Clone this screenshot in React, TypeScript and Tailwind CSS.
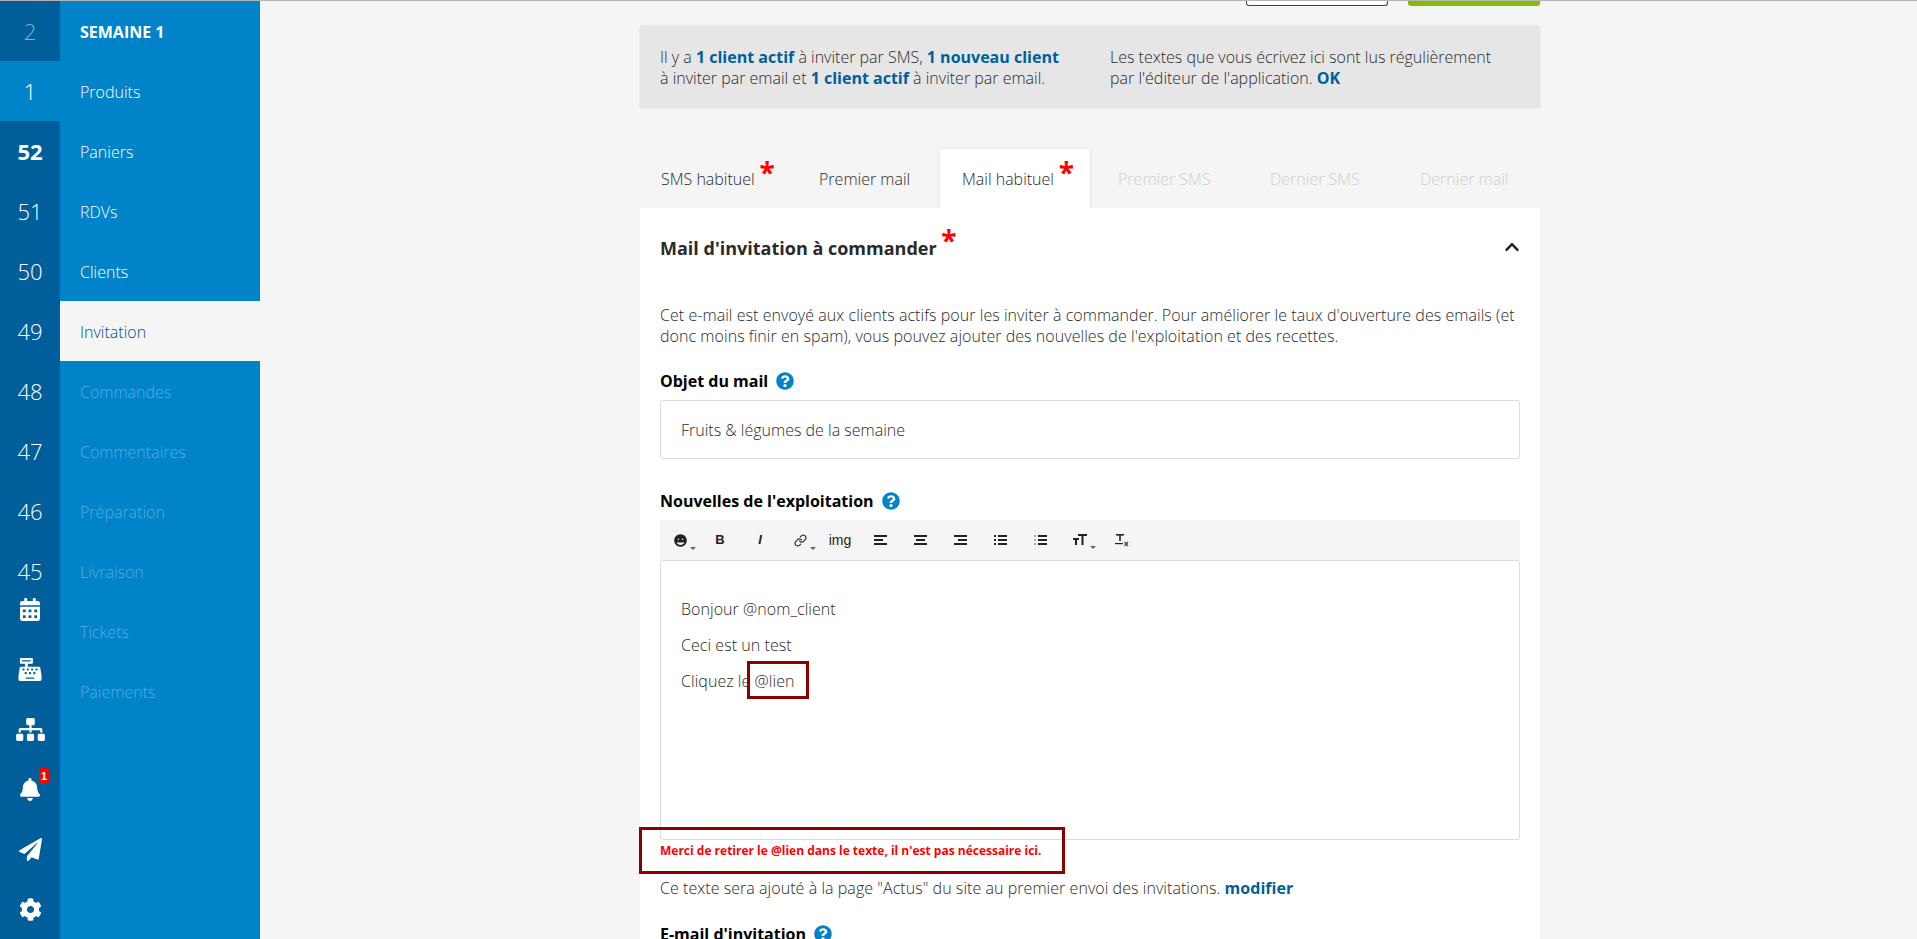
import { Link } from "lucide-react";
import {
  FaBell,
  FaCalendarAlt,
  FaCashRegister,
  FaChevronUp,
  FaCog,
  FaGrin,
  FaPaperPlane,
  FaQuestionCircle,
  FaSitemap,
} from "react-icons/fa";

const weeks = [
  { n: "2", cls: "bg-[#005f9a] text-white/50 font-light" },
  { n: "1", cls: "bg-[#0083c9] text-white font-light" },
  { n: "52", cls: "text-white font-bold" },
  { n: "51", cls: "text-white font-light" },
  { n: "50", cls: "text-white font-light" },
  { n: "49", cls: "text-white font-light" },
  { n: "48", cls: "text-white font-light" },
  { n: "47", cls: "text-white font-light" },
  { n: "46", cls: "text-white font-light" },
  { n: "45", cls: "text-white font-light" },
];

const menu = [
  { label: "Produits", on: true },
  { label: "Paniers", on: true },
  { label: "RDVs", on: true },
  { label: "Clients", on: true },
  { label: "Invitation", active: true },
  { label: "Commandes" },
  { label: "Commentaires" },
  { label: "Préparation" },
  { label: "Livraison" },
  { label: "Tickets" },
  { label: "Paiements" },
];

function Star() {
  return <span className="absolute top-[-9px] right-[-20px] text-[28px] leading-[28px] font-bold text-[#ff0000]">*</span>;
}

function Help() {
  return <FaQuestionCircle className="w-[18px] h-[18px] text-[#0083c9]" />;
}

function Lines({ b }: { b: string }) {
  return (
    <span className="flex flex-col gap-[2px] w-[13px]">
      <span className="h-[2px] bg-[#222]" />
      <span className={`h-[2px] bg-[#222] ${b}`} />
      <span className="h-[2px] bg-[#222]" />
    </span>
  );
}

function ListIcon({ dot }: { dot: string }) {
  return (
    <span className="flex flex-col gap-[2px] w-[13px]">
      {[0, 1, 2].map((i) => (
        <span key={i} className="flex gap-[2px] h-[2px]">
          <span className={`w-[2px] ${dot}`} />
          <span className="flex-1 bg-[#222]" />
        </span>
      ))}
    </span>
  );
}

function Caret() {
  return <span className="absolute right-[-9px] bottom-[-3px] border-x-[3px] border-t-[3px] border-x-transparent border-t-[#666]" />;
}

function ToolBtn({ children }: { children: React.ReactNode }) {
  return <div className="relative w-[40px] h-[40px] flex items-center justify-center text-[#222]">{children}</div>;
}

export default function App() {
  return (
    <div className="relative flex h-[939px] overflow-hidden bg-[#f5f5f5] border-t border-[#b5b5b5] font-['Open_Sans',sans-serif] text-[16px] text-[#2a2a2a]">
      {/* Weeks column */}
      <div className="w-[60px] shrink-0 bg-[#005f9a] flex flex-col">
        {weeks.map((w) => (
          <div key={w.n} className={`h-[60px] shrink-0 flex items-center justify-center text-[22px] ${w.cls}`}>
            {w.n}
          </div>
        ))}
        <div className="mt-[-22px] flex flex-col items-center text-white">
          <div className="h-[60px] flex items-center justify-center">
            <FaCalendarAlt className="w-[20px] h-[23px]" />
          </div>
          <div className="h-[60px] flex items-center justify-center">
            <FaCashRegister className="w-[24px] h-[23px]" />
          </div>
          <div className="h-[60px] flex items-center justify-center">
            <FaSitemap className="w-[29px] h-[23px]" />
          </div>
          <div className="relative h-[60px] flex items-center justify-center">
            <FaBell className="w-[20px] h-[23px]" />
            <span className="absolute top-[9px] right-[-9px] w-[10px] h-[16px] rounded-[3px] bg-[#ff0000] text-white text-[11px] font-bold leading-[16px] text-center font-['Liberation_Sans',sans-serif]">1</span>
          </div>
          <div className="h-[60px] flex items-center justify-center">
            <FaPaperPlane className="w-[23px] h-[23px]" />
          </div>
          <div className="h-[60px] flex items-center justify-center">
            <FaCog className="w-[23px] h-[23px]" />
          </div>
        </div>
      </div>

      {/* Menu column */}
      <div className="w-[200px] shrink-0 bg-[#0083c9] flex flex-col">
        <div className="h-[60px] shrink-0 flex items-center pl-[20px] pt-[1px] text-white font-bold">SEMAINE 1</div>
        {menu.map((m) => (
          <div
            key={m.label}
            className={`h-[60px] shrink-0 flex items-center pl-[20px] pt-[1px] font-light ${
              m.active ? "bg-[#f5f5f5] text-[#004d7f]" : m.on ? "text-white" : "text-white/35"
            }`}
          >
            {m.label}
          </div>
        ))}
      </div>

      {/* Main */}
      <div className="w-[900px] ml-[380px] shrink-0 flex flex-col">
        <div className="shrink-0 flex justify-end gap-[20px] h-[5px]">
          <div className="w-[142px] h-[5px] bg-white border-x border-b border-[#444] rounded-b-[3px]" />
          <div className="w-[132px] h-[5px] bg-[#83bd00] rounded-b-[3px]" />
        </div>

        <div className="shrink-0 mt-[20px] h-[82px] bg-[#e6e6e6] rounded-[3px] shadow-[0_0_2px_rgba(0,0,0,0.15)] flex px-[20px] pt-[21px] leading-[21px] font-light">
          <p className="w-[450px]">
            Il y a <b className="font-bold text-[#005f9a]">1 client actif</b> à inviter par SMS, <b className="font-bold text-[#005f9a]">1 nouveau client</b>
            <br />à inviter par email et <b className="font-bold text-[#005f9a]">1 client actif</b> à inviter par email.
          </p>
          <p>
            Les textes que vous écrivez ici sont lus régulièrement
            <br />par l'éditeur de l'application. <b className="font-bold text-[#005f9a]">OK</b>
          </p>
        </div>

        {/* Tabs */}
        <div className="shrink-0 mt-[40px] flex h-[60px] pt-[1px] font-light">
          <div className="w-[150px] pl-[21px] flex items-center"><span className="relative">SMS habituel<Star /></span></div>
          <div className="ml-[8px] w-[134px] pl-[21px] flex items-center">Premier mail</div>
          <div className="ml-[8px] w-[150px] pl-[22px] flex items-center bg-white shadow-[0_0_4px_rgba(0,0,0,0.08)]"><span className="relative">Mail habituel<Star /></span></div>
          <div className="ml-[28px] w-[152px] flex items-center text-[#cfcfcf]">Premier SMS</div>
          <div className="w-[150px] flex items-center text-[#cfcfcf]">Dernier SMS</div>
          <div className="flex items-center text-[#cfcfcf]">Dernier mail</div>
        </div>

        {/* Card */}
        <div className="bg-white px-[20px] flex-1">
          <div className="h-[80px] flex items-center justify-between">
            <h2 className="relative text-[18px] font-bold">
              Mail d'invitation à commander
              <Star />
            </h2>
            <FaChevronUp className="w-[16px] h-[16px] mb-[2px] text-[#222]" />
          </div>

          <p className="mt-[17px] leading-[21px] font-light tracking-[0.05px]">
            Cet e-mail est envoyé aux clients actifs pour les inviter à commander. Pour améliorer le taux d'ouverture des emails (et donc moins finir en spam), vous pouvez ajouter des nouvelles de l'exploitation et des recettes.
          </p>

          <div className="mt-[24px] flex items-center gap-[8px] h-[20px] font-bold text-black">
            Objet du mail <Help />
          </div>
          <div className="mt-[9px] h-[59px] flex items-center px-[20px] bg-white border border-[#dcdcdc] rounded-[3px] font-light">
            Fruits &amp; légumes de la semaine
          </div>

          <div className="mt-[32px] flex items-center gap-[8px] h-[20px] font-bold text-black">
            Nouvelles de l'exploitation <Help />
          </div>
          <div className="mt-[9px] h-[40px] bg-[#f5f5f5] flex items-center">
            <ToolBtn><span className="relative"><FaGrin className="w-[13px] h-[13px]" /><Caret /></span></ToolBtn>
            <ToolBtn><span className="text-[13px] font-bold font-['Liberation_Sans',sans-serif]">B</span></ToolBtn>
            <ToolBtn><span className="text-[13px] font-bold italic font-['Liberation_Sans',sans-serif]">I</span></ToolBtn>
            <ToolBtn><span className="relative"><Link className="w-[13px] h-[13px]" /><Caret /></span></ToolBtn>
            <ToolBtn><span className="text-[14px] font-['Liberation_Sans',sans-serif]">img</span></ToolBtn>
            <ToolBtn><Lines b="w-[9px]" /></ToolBtn>
            <ToolBtn><Lines b="w-[9px] mx-auto" /></ToolBtn>
            <ToolBtn><Lines b="w-[9px] ml-auto" /></ToolBtn>
            <ToolBtn><ListIcon dot="bg-[#222]" /></ToolBtn>
            <ToolBtn><ListIcon dot="bg-[#aaa]" /></ToolBtn>
            <ToolBtn>
              <span className="relative">
                <svg width="14" height="12" viewBox="0 0 14 12" fill="#222" className="block">
                  <rect x="5" y="0" width="9" height="2" />
                  <rect x="8.5" y="0" width="2" height="11" />
                  <rect x="0" y="4" width="6" height="2" />
                  <rect x="2" y="4" width="2" height="7" />
                </svg>
                <Caret />
              </span>
            </ToolBtn>
            <ToolBtn>
              <svg width="14" height="14" viewBox="0 0 14 14" fill="#222" className="ml-[3px]">
                <rect x="1" y="1" width="8" height="1.6" />
                <rect x="4.2" y="1" width="1.6" height="7" />
                <rect x="0" y="10" width="8" height="1.2" />
                <path d="M9.5 9 L13 13 M13 9 L9.5 13" stroke="#444" strokeWidth="1.3" />
              </svg>
            </ToolBtn>
          </div>
          <div className="h-[280px] border border-[#dcdcdc] rounded-[3px] px-[20px] pt-[30px] font-light leading-[36px] tracking-[0.05px]">
            <p>Bonjour @nom_client</p>
            <p>Ceci est un test</p>
            <p>Cliquez le @lien</p>
          </div>

          <p className="mt-[38px] leading-[21px] font-light tracking-[0.05px]">
            Ce texte sera ajouté à la page "Actus" du site au premier envoi des invitations. <b className="font-bold text-[#005f9a]">modifier</b>
          </p>

          <div className="mt-[25px] flex items-center gap-[8px] h-[20px] font-bold text-black">
            E-mail d'invitation <Help />
          </div>
        </div>
      </div>

      {/* Review annotations drawn over the page */}
      <div className="absolute left-[747px] top-[660px] w-[62px] h-[38px] border-[3px] border-[#8b0000]" />
      <div className="absolute left-[639px] top-[826px] w-[426px] h-[47px] border-[3px] border-[#8b0000] flex items-center pl-[18px] text-[12px] font-bold text-[#ff0000]">
        Merci de retirer le @lien dans le texte, il n'est pas nécessaire ici.
      </div>
    </div>
  );
}
